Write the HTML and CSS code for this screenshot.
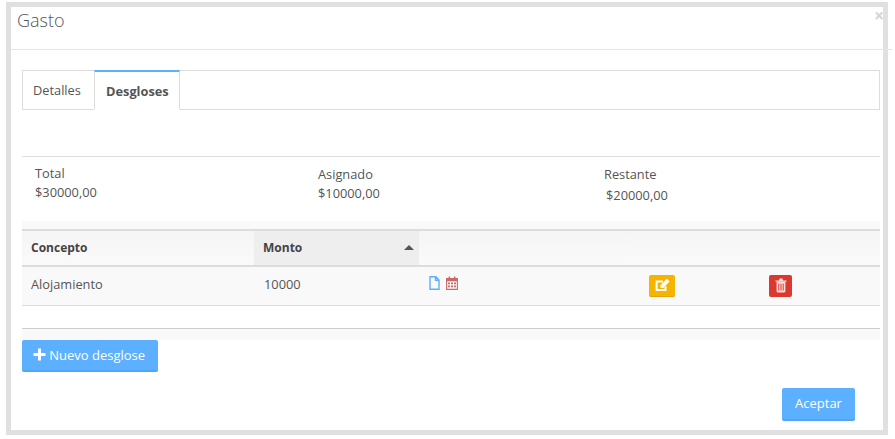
FILE: index.html
```html
<!DOCTYPE html>
<html lang="en">
<head>
    <meta charset="UTF-8">
    <title>Gasto</title>
    <link rel="stylesheet" href="styles.css">
</head>
<body>
    <div class="modal">
        <div class="modal-header">
            <h4>Gasto</h4>
            <span class="close">&times;</span>
        </div>
        <div class="modal-body">
            <ul class="tabs">
                <li>Detalles</li>
                <li class="active">Desgloses</li>
            </ul>

            <div class="totals">
                <div class="total-col col-a">Total<br>$30000,00</div>
                <div class="total-col col-b">Asignado<br>$10000,00</div>
                <div class="total-col col-c">Restante<br><span class="shift">$20000,00</span></div>
            </div>

            <div class="table-wrap">
                <table>
                    <thead>
                        <tr>
                            <th class="c-concepto">Concepto</th>
                            <th class="c-monto sorted">Monto<span class="sort-arrow"></span></th>
                            <th class="c-files"></th>
                            <th class="c-edit"></th>
                            <th></th>
                        </tr>
                    </thead>
                    <tbody>
                        <tr>
                            <td>Alojamiento</td>
                            <td class="monto">10000</td>
                            <td class="files">
                                <svg class="ico" width="11" height="14" viewBox="0 0 11 14"><path d="M1 .7h5.8L10 4v9.3H1zM6.5.9v3.4h3.4" fill="none" stroke="#5cb0ff" stroke-width="1.4"/></svg>
                                <svg class="ico" width="12" height="14" viewBox="0 0 12 14"><path d="M.6 2.5h10.8v10.9H.6z" fill="none" stroke="#c86a6a" stroke-width="1.1"/><path d="M.5 2.5h11v2.7H.5zM2.6.5h1.5v2.5H2.6zM7.9.5h1.5v2.5H7.9z" fill="#c86a6a"/><path d="M2 6.6h2v1.6H2zM5 6.6h2v1.6H5zM8 6.6h2v1.6H8zM2 9.6h2v1.6H2zM5 9.6h2v1.6H5zM8 9.6h2v1.6H8z" fill="#c86a6a"/></svg>
                            </td>
                            <td class="edit-cell">
                                <span class="btn-sm btn-edit">
                                    <svg width="15" height="14" viewBox="0 0 15 14"><path d="M10.5 8.5v3.6H1.6V3.6H8" fill="none" stroke="#fff" stroke-width="2"/><path d="M5.5 7.2 11.8.8l2.8 2.8-6.3 6.3H5.5z" fill="#fff"/></svg>
                                </span>
                            </td>
                            <td class="del-cell">
                                <span class="btn-sm btn-del">
                                    <svg width="12" height="15" viewBox="0 0 12 15"><path d="M.5 2.4h11v1.3H.5zM3.8 2.4 4.6.6h2.8l.8 1.8z" fill="#fbdcda"/><path d="M1.6 3.7h8.8v9.6q0 1.1-1.1 1.1H2.7q-1.1 0-1.1-1.1z" fill="#fbdcda"/><path d="M3.8 5.6v7M6 5.6v7M8.2 5.6v7" stroke="#d9392f" stroke-width="1"/></svg>
                                </span>
                            </td>
                        </tr>
                    </tbody>
                </table>
            </div>

            <div class="table-foot"></div>

            <button class="btn btn-new">
                <svg class="plus" width="13" height="13" viewBox="0 0 13 13"><path d="M5 .5h3V5h4.5v3H8v4.5H5V8H.5V5H5z" fill="#fff"/></svg>
                Nuevo desglose
            </button>
        </div>
        <div class="modal-footer">
            <button class="btn btn-ok">Aceptar</button>
        </div>
    </div>
</body>
</html>
```

FILE: styles.css
```css
html, body {
    margin: 0;
    padding: 0;
    height: 100%;
    background: #fff;
    overflow: hidden;
}
body {
    font-family: "Open Sans", sans-serif;
    font-size: 12.8px;
    color: #555;
}
.modal {
    box-sizing: border-box;
    width: 882px;
    height: 433px;
    margin: 2px 0 0 6px;
    border: 5px solid #e0e0e0;
    background: #fff;
}
.modal-header {
    position: relative;
    height: 42px;
    margin-right: -9px;
    border-bottom: 1px solid #e5e5e5;
}
.modal-header h4 {
    margin: 0;
    padding: 1px 0 0 6px;
    font-size: 18px;
    font-weight: 300;
    line-height: 24px;
    color: #555;
}
.close {
    position: absolute;
    top: 0;
    right: 8px;
    font-size: 17px;
    font-weight: 700;
    line-height: 17px;
    color: #d4d4d4;
}
.modal-body {
    padding: 20px 3px 0 11px;
}
.tabs {
    display: flex;
    height: 38px;
    margin: 0;
    padding: 0;
    list-style: none;
    border: 1px solid #ddd;
}
.tabs li {
    padding: 0 10px;
    line-height: 38px;
    width: 51px;
}
.tabs .active {
    width: 63px;
    margin-top: -1px;
    padding: 0 10px 0 11px;
    border: solid #ddd;
    border-width: 2px 1px 1px;
    border-top-color: #5cb0ff;
    border-bottom-color: #fff;
    height: 37px;
    font-weight: 700;
    background: #fff;
}
.totals {
    display: grid;
    grid-template-columns: 283px 286px 1fr;
    height: 64px;
    margin-top: 46px;
    border-top: 1px solid #ddd;
    line-height: 18.5px;
}
.total-col {
    padding-left: 13px;
    padding-top: 7px;
}
.col-b, .col-c {
    padding-top: 8px;
}
.shift {
    display: inline-block;
    margin: 2px 0 0 2px;
}
.table-wrap {
    padding-top: 8px;
    background: #f9f9f9;
}
table {
    width: 100%;
    border-collapse: collapse;
    table-layout: fixed;
}
th {
    height: 32px;
    padding: 0 9px 2px;
    text-align: left;
    font-size: 12px;
    font-weight: 700;
    color: #444;
    border-top: 2px solid #ddd;
    border-bottom: 2px solid #ddd;
    background: linear-gradient(#f5f5f5, #fafafa);
}
th.sorted {
    position: relative;
    background: #eee;
}
.c-concepto {
    width: 214px;
}
.c-monto {
    width: 147px;
}
.c-files {
    width: 193px;
}
.c-edit {
    width: 114px;
}
.sort-arrow {
    position: absolute;
    top: 14px;
    right: 5px;
    border: 5px solid transparent;
    border-top: 0;
    border-bottom: 5px solid #555;
}
td {
    box-sizing: border-box;
    height: 39px;
    padding: 0 9px 4px;
    background: #f9f9f9;
    border-bottom: 1px solid #ddd;
}
.monto {
    padding-left: 10px;
}
.files {
    padding: 0 0 8px 10px;
}
.ico {
    vertical-align: middle;
}
.ico + .ico {
    margin-left: 3px;
}
.edit-cell, .del-cell {
    padding: 0 0 0 19px;
}
.del-cell {
    padding-left: 7px;
}
.btn-sm {
    display: flex;
    align-items: center;
    justify-content: center;
    height: 22px;
    border-radius: 2px;
}
.btn-edit {
    width: 26px;
    background: #f5b400;
    border-bottom: 1px solid #e0a500;
    height: 21px;
}
.btn-del {
    width: 23px;
    background: #d9392f;
}
.table-foot {
    height: 11px;
    margin-top: 22px;
    border-top: 1px solid #ccc;
    background: #f9f9f9;
}
.btn {
    font-family: inherit;
    font-size: 13px;
    color: #fff;
    border: 0;
    border-bottom: 2px solid #51a5f5;
    border-radius: 2px;
    background: #5cb0ff;
}
.btn-new {
    display: block;
    width: 136px;
    height: 32px;
    padding: 0 2px 0 0;
}
.plus {
    vertical-align: -1px;
}
.modal-footer {
    display: flex;
    justify-content: flex-end;
    padding: 16px 28px 0 0;
}
.btn-ok {
    width: 73px;
    height: 33px;
}
```
